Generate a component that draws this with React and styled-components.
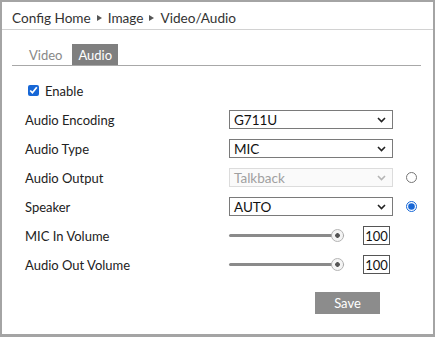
import React from 'react';
import {styled, createGlobalStyle} from 'styled-components';

const Global = createGlobalStyle`
    html, body { margin: 0; padding: 0; background: #fff; }
    body { font-family: Lato, "Liberation Sans", sans-serif; color: #222; }
`;

const Frame = styled.div`
    width: 435px;
    height: 337px;
    box-sizing: border-box;
    border: 2px solid #a4a4a4;
    border-bottom-width: 3px;
    background: #fff;
`;

const Header = styled.div`
    height: 28px;
    box-sizing: border-box;
    padding: 4px 0 0 10px;
    border-bottom: 1px solid #d2d2d2;
    display: flex;
    align-items: center;
    gap: 6px;
    font-size: 13.6px;
    color: #333;
`;

const Arrow = styled.span`
    width: 0;
    height: 0;
    border-top: 3.5px solid transparent;
    border-bottom: 3.5px solid transparent;
    border-left: 5px solid #555;
`;

const Body = styled.div`
    padding: 14px 12px 0 10px;
`;

const TabBar = styled.div`
    display: flex;
    gap: 4px;
    padding-left: 11px;
    border-bottom: 1px solid #a8a8a8;
`;

const Tab = styled.div`
    height: 21px;
    padding: 0 6px;
    display: flex;
    align-items: center;
    font-size: 13px;
    color: ${(props) => props.active ? '#fff' : '#888'};
    background: ${(props) => props.active ? '#7f7f7f' : 'transparent'};
`;

const Form = styled.div`
    display: grid;
    grid-template-columns: 204px 164px auto;
    grid-auto-rows: 29px;
    align-items: center;
    margin: 10px 0 0 13px;
    font-size: 13px;
`;

const EnableRow = styled.label`
    grid-column: 1 / -1;
    display: flex;
    align-items: center;
    gap: 6px;
    padding-left: 3px;
`;

const Check = styled.input`
    width: 11px;
    height: 11px;
    margin: 0;
    accent-color: #1767d6;
`;

const Label = styled.div`
    grid-column: 1;
`;

const SelectBox = styled.div`
    position: relative;
    height: 19px;
    box-sizing: border-box;
    border: 1px solid ${(props) => props.disabled ? '#dcdcdc' : '#7a7a7a'};
    background: ${(props) => props.disabled ? '#fafafa' : '#fff'};
    color: ${(props) => props.disabled ? '#a0a0a0' : '#111'};
    display: flex;
    align-items: center;
    padding-left: 4px;
    font-size: 13.5px;
`;

const Chevron = styled.svg`
    position: absolute;
    right: 6px;
    top: 6px;
`;

const Radio = styled.input`
    width: 11px;
    height: 11px;
    margin: 0 0 0 13px;
    accent-color: #1767d6;
`;

const SliderCell = styled.div`
    display: flex;
    align-items: center;
    gap: 19px;
`;

const Range = styled.input`
    -webkit-appearance: none;
    appearance: none;
    width: 115px;
    height: 14px;
    margin: 0;
    background: transparent;
    &::-webkit-slider-runnable-track {
        height: 3px;
        background: #8a8a8a;
        border-radius: 2px;
    }
    &::-webkit-slider-thumb {
        -webkit-appearance: none;
        width: 13px;
        height: 13px;
        margin-top: -5px;
        box-sizing: border-box;
        border-radius: 50%;
        border: 1px solid #b4b4b4;
        background: radial-gradient(circle, #555 0 2px, #f4f4f4 2.6px);
    }
`;

const NumBox = styled.input`
    width: 27px;
    height: 19px;
    box-sizing: border-box;
    border: 1px solid #555;
    padding: 0;
    text-align: center;
    font-family: inherit;
    font-size: 13px;
    color: #111;
`;

const Footer = styled.div`
    padding: 13px 0 0 303px;
`;

const SaveBtn = styled.button`
    width: 65px;
    height: 22px;
    border: none;
    background: #8c8c8c;
    color: #fff;
    font-family: inherit;
    font-size: 13px;
`;

function Select({value, disabled}) {
    return (
        <SelectBox disabled={disabled}>
            {value}
            <Chevron width="9" height="6" viewBox="0 0 9 6">
                <path d="M1 1 L4.5 4.5 L8 1" fill="none" stroke={disabled ? '#b5b5b5' : '#222'} strokeWidth="1.6" />
            </Chevron>
        </SelectBox>
    );
}

function Slider({value}) {
    return (
        <SliderCell>
            <Range type="range" min="0" max="100" defaultValue={value} />
            <NumBox type="text" defaultValue={value} />
        </SliderCell>
    );
}

export default function App() {
    return (
        <>
            <Global />
            <Frame>
                <Header>
                    Config Home <Arrow /> Image <Arrow /> Video/Audio
                </Header>
                <Body>
                    <TabBar>
                        <Tab>Video</Tab>
                        <Tab active>Audio</Tab>
                    </TabBar>
                    <Form>
                        <EnableRow>
                            <Check type="checkbox" defaultChecked />
                            Enable
                        </EnableRow>
                        <Label>Audio Encoding</Label>
                        <Select value="G711U" />
                        <span />
                        <Label>Audio Type</Label>
                        <Select value="MIC" />
                        <span />
                        <Label>Audio Output</Label>
                        <Select value="Talkback" disabled />
                        <Radio type="radio" name="out" />
                        <Label>Speaker</Label>
                        <Select value="AUTO" />
                        <Radio type="radio" name="out" defaultChecked />
                        <Label>MIC In Volume</Label>
                        <Slider value={100} />
                        <span />
                        <Label>Audio Out Volume</Label>
                        <Slider value={100} />
                        <span />
                    </Form>
                    <Footer>
                        <SaveBtn type="button">Save</SaveBtn>
                    </Footer>
                </Body>
            </Frame>
        </>
    );
}
